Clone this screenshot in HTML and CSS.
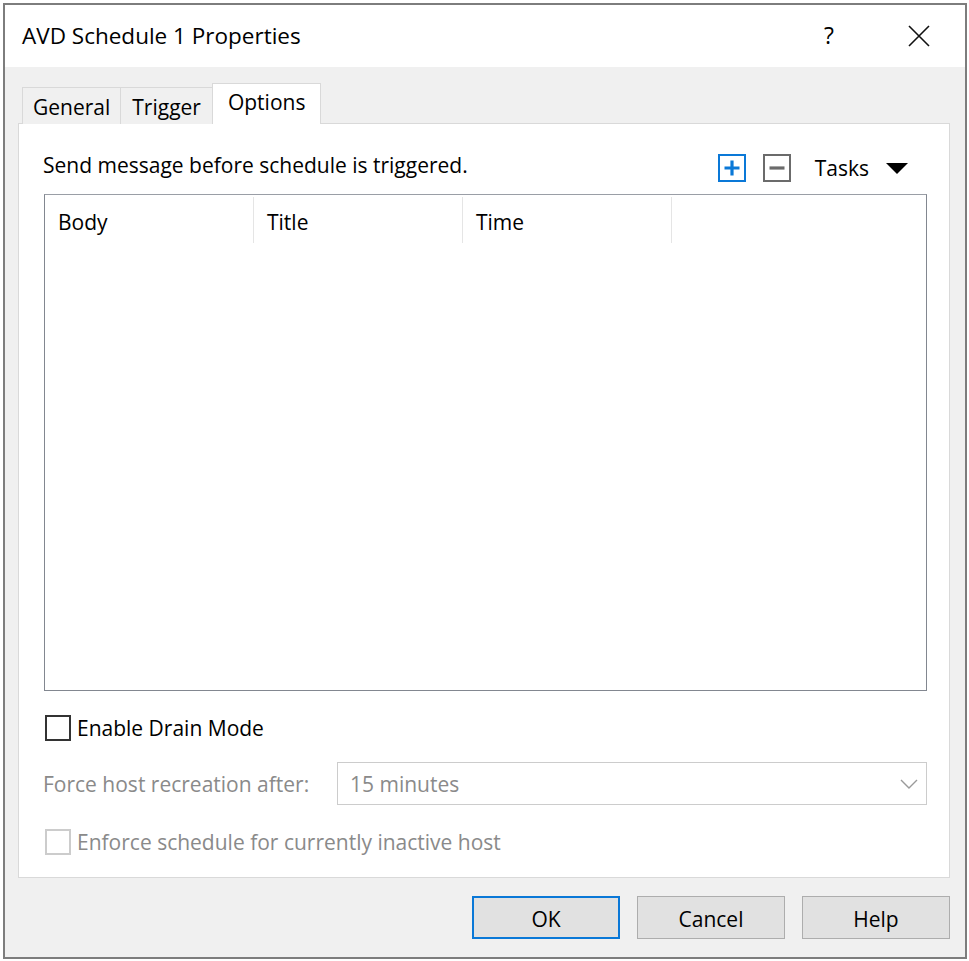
FILE: index.html
```html
<!DOCTYPE html>
<html>
<head>
<meta charset="utf-8">
<link rel="stylesheet" href="styles.css">
</head>
<body>
<div class="window">
  <div class="titlebar">
    <span class="title">AVD Schedule 1 Properties</span>
    <span class="help-q">?</span>
    <svg class="close" width="22" height="22" viewBox="0 0 22 22"><path d="M1 1 L21 21 M21 1 L1 21" stroke="#111" stroke-width="1.6" fill="none"/></svg>
  </div>
  <div class="client">
    <div class="tabs">
      <div class="tab">General</div>
      <div class="tab">Trigger</div>
      <div class="tab active">Options</div>
    </div>
    <div class="panel">
      <div class="toprow">
        <span class="label">Send message before schedule is triggered.</span>
        <div class="tools">
          <span class="icon-btn plus"><svg width="28" height="28" viewBox="0 0 28 28"><rect x="1" y="1" width="26" height="26" fill="none" stroke="#0a78d7" stroke-width="2"/><path d="M14 6.5 V21.5 M6.5 14 H21.5" stroke="#0a78d7" stroke-width="3.2"/></svg></span>
          <span class="icon-btn minus"><svg width="28" height="28" viewBox="0 0 28 28"><rect x="1" y="1" width="26" height="26" fill="none" stroke="#6b6b6b" stroke-width="2"/><path d="M6.5 14 H21.5" stroke="#6b6b6b" stroke-width="3.2"/></svg></span>
          <span class="tasks">Tasks</span>
          <svg class="caret" width="22" height="11" viewBox="0 0 22 11"><path d="M0 0 H22 L11 11 Z" fill="#000"/></svg>
        </div>
      </div>
      <div class="list">
        <div class="list-head">
          <div class="col">Body</div>
          <div class="col">Title</div>
          <div class="col">Time</div>
        </div>
      </div>
      <label class="check-row">
        <span class="box"></span>
        <span>Enable Drain Mode</span>
      </label>
      <div class="form-row disabled">
        <span class="form-label">Force host recreation after:</span>
        <div class="select">
          <span>15 minutes</span>
          <svg class="chev" width="18" height="10" viewBox="0 0 18 10"><path d="M1 1 L9 9 L17 1" stroke="#9a9a9a" stroke-width="1.4" fill="none"/></svg>
        </div>
      </div>
      <label class="check-row disabled last">
        <span class="box"></span>
        <span>Enforce schedule for currently inactive host</span>
      </label>
    </div>
    <div class="buttons">
      <button class="btn default">OK</button>
      <button class="btn">Cancel</button>
      <button class="btn">Help</button>
    </div>
  </div>
</div>
</body>
</html>
```

FILE: styles.css
```css
html, body {
  margin: 0;
  padding: 0;
  background: #ffffff;
}
body {
  font-family: "Open Sans", "Noto Sans", "DejaVu Sans", sans-serif;
  font-size: 21px;
  color: #000;
}
.window {
  margin: 3px 0 0 3px;
  width: 960px;
  height: 952px;
  border: 2px solid #7d7d7d;
  display: flex;
  flex-direction: column;
  background: #f0f0f0;
}
.titlebar {
  height: 62px;
  flex: none;
  background: #fff;
  display: flex;
  align-items: center;
  padding-left: 17px;
  padding-right: 35px;
}
.title {
  font-size: 22.5px;
  flex: 1;
  padding-bottom: 2px;
}
.help-q {
  font-size: 23px;
  margin-right: 74px;
  padding-bottom: 2px;
}
.close {
  display: block;
}
.client {
  flex: 1;
  display: flex;
  flex-direction: column;
  padding: 16px 14px 17px 13px;
}
.tabs {
  display: flex;
  align-items: flex-end;
  padding-left: 4px;
  height: 41px;
  margin-bottom: -1px;
  position: relative;
  z-index: 1;
}
.tab {
  height: 37px;
  box-sizing: border-box;
  border: 1px solid #d9d9d9;
  border-bottom: none;
  background: #f0f0f0;
  padding: 2px 10px 0 10px;
  display: flex;
  align-items: center;
  margin-right: -1px;
}
.tab + .tab {
  padding: 2px 11px 0 11px;
}
.tab.active {
  height: 41px;
  background: #fff;
  padding: 0 15px 5px 15px;
  margin-right: 0;
}
.panel {
  width: 932px;
  height: 755px;
  box-sizing: border-box;
  border: 1px solid #d9d9d9;
  background: #fff;
  padding: 30px 41px 0 25px;
  display: flex;
  flex-direction: column;
}
.toprow {
  display: flex;
  align-items: center;
  height: 28px;
}
.toprow .label {
  flex: 1;
  margin-top: -6px;
  margin-left: -1px;
}
.tools {
  display: flex;
  align-items: center;
}
.icon-btn {
  display: block;
  width: 28px;
  height: 28px;
}
.icon-btn svg {
  display: block;
}
.plus {
  margin-right: 17px;
}
.tasks {
  margin-left: 24px;
  margin-right: 17px;
}
.caret {
  display: block;
  margin-top: 1px;
}
.list {
  margin-top: 12px;
  width: 883px;
  height: 497px;
  box-sizing: border-box;
  border: 1px solid #828790;
  border-top-color: #9a9ea6;
  background: #fff;
}
.list-head {
  display: flex;
  height: 52px;
}
.col {
  width: 209px;
  box-sizing: border-box;
  border-right: 1px solid #e5e5e5;
  margin: 2px 0 4px 0;
  padding: 3px 0 0 13px;
  display: flex;
  align-items: center;
}
.check-row {
  display: flex;
  align-items: center;
  height: 26px;
  margin-top: 24px;
  margin-left: 1px;
}
.box {
  width: 26px;
  height: 26px;
  box-sizing: border-box;
  border: 2px solid #333;
  background: #fff;
  margin-right: 6px;
}
.disabled {
  color: #8a8a8a;
}
.disabled .box {
  border-color: #cccccc;
}
.form-row {
  display: flex;
  align-items: center;
  margin-top: 21px;
  height: 43px;
}
.form-label {
  width: 294px;
  margin-left: -1px;
}
.select {
  flex: 1;
  height: 43px;
  box-sizing: border-box;
  border: 1px solid #cccccc;
  background: #fff;
  display: flex;
  align-items: center;
  padding-left: 12px;
  padding-right: 8px;
  margin-right: -19px;
}
.select span {
  flex: 1;
}
.chev {
  display: block;
}
.check-row.last {
  margin-top: 24px;
}
.buttons {
  display: flex;
  justify-content: flex-end;
  gap: 17px;
  margin-top: 18px;
  margin-right: 1px;
}
.btn {
  width: 148px;
  height: 43px;
  box-sizing: border-box;
  border: 1px solid #adadad;
  background: #e1e1e1;
  font-family: inherit;
  font-size: 21px;
  color: #000;
  padding: 2px 0 0 0;
  margin: 0;
}
.btn.default {
  border: 2px solid #0a78d7;
}
```
